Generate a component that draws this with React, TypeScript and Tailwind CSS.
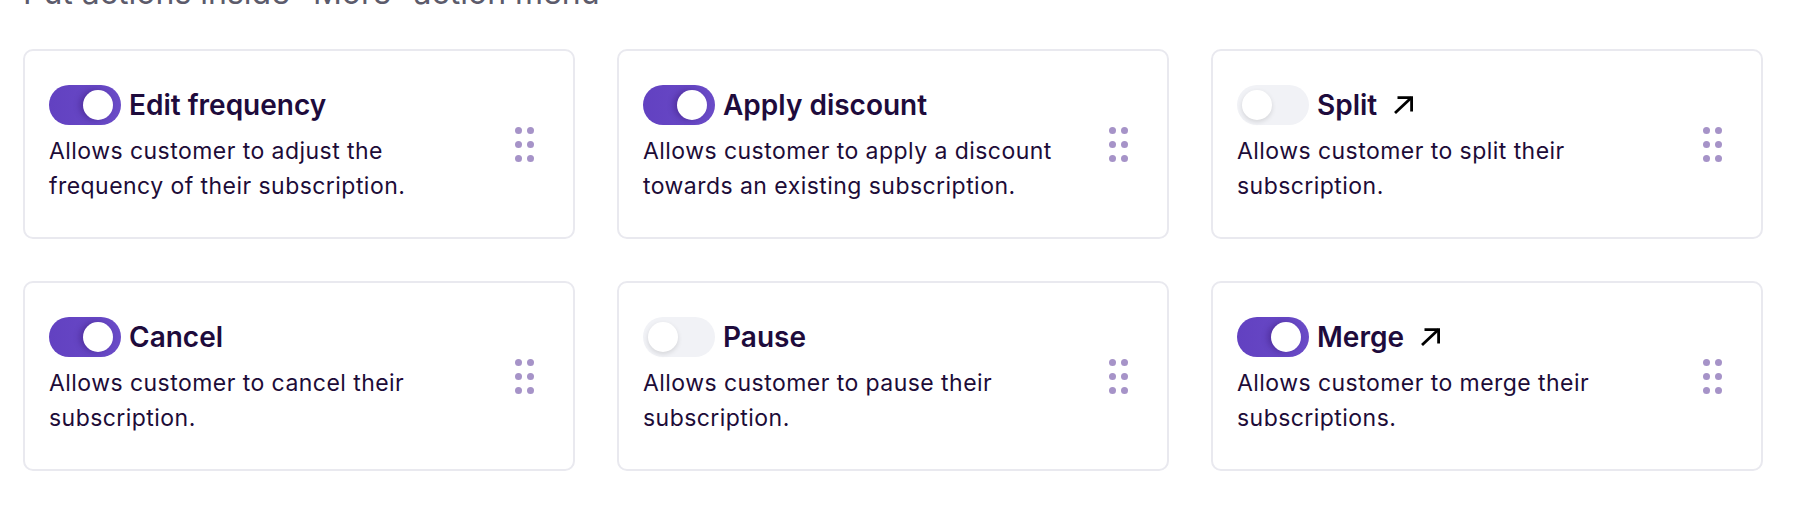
import React from "react";

interface ActionItem {
  title: string;
  description: string;
  enabled: boolean;
  external?: boolean;
}

const actions: ActionItem[] = [
  { title: "Edit frequency", description: "Allows customer to adjust the frequency of their subscription.", enabled: true },
  { title: "Apply discount", description: "Allows customer to apply a discount towards an existing subscription.", enabled: true },
  { title: "Split", description: "Allows customer to split their subscription.", enabled: false, external: true },
  { title: "Cancel", description: "Allows customer to cancel their subscription.", enabled: true },
  { title: "Pause", description: "Allows customer to pause their subscription.", enabled: false },
  { title: "Merge", description: "Allows customer to merge their subscriptions.", enabled: true, external: true },
];

function Toggle({ on }: { on: boolean }) {
  return (
    <div
      className={
        on
          ? "relative w-[72px] h-[40px] rounded-full bg-gradient-to-r from-[#6241c1] to-[#6a4bc7] flex-shrink-0"
          : "relative w-[72px] h-[40px] rounded-full bg-[#f1f2f6] flex-shrink-0"
      }
    >
      <div
        className={
          on
            ? "absolute top-[5px] right-[8px] w-[30px] h-[30px] rounded-full bg-white shadow-[-3px_0_6px_rgba(40,10,90,0.35)]"
            : "absolute top-[5px] left-[5px] w-[30px] h-[30px] rounded-full bg-white shadow-[0_2px_5px_rgba(0,0,0,0.12)]"
        }
      />
    </div>
  );
}

function ArrowIcon() {
  return (
    <svg width="21" height="18" viewBox="0 0 21 18" fill="none" className="flex-shrink-0">
      <path d="M2 17 L18.5 1.5" stroke="#000" strokeWidth="2.8" />
      <path d="M4.5 1.6 H18.6 V15.5" stroke="#000" strokeWidth="2.8" />
    </svg>
  );
}

function DragHandle() {
  return (
    <div className="grid grid-cols-2 gap-x-[5px] gap-y-[7px] w-[19px] flex-shrink-0">
      {Array.from({ length: 6 }).map((_, i) => (
        <div key={i} className="w-[7px] h-[7px] rounded-full bg-[#a693c8]" />
      ))}
    </div>
  );
}

function ActionCard({ item }: { item: ActionItem }) {
  return (
    <div className="h-[190px] bg-white border-2 border-[#e9e9ef] rounded-[10px] flex items-center pl-[24px] pr-[39px]">
      <div className="flex-1 min-w-0">
        <div className="flex items-center gap-[8px] h-[40px]">
          <Toggle on={item.enabled} />
          <span className="text-[28px] font-semibold text-[#1e0b3c] leading-none">{item.title}</span>
          {item.external && (
            <span className="ml-[8px] mt-[1px]">
              <ArrowIcon />
            </span>
          )}
        </div>
        <p className="mt-[9px] text-[23px] tracking-[0.45px] leading-[35px] text-[#1d0c38] max-w-[430px]">{item.description}</p>
      </div>
      <DragHandle />
    </div>
  );
}

export default function App() {
  return (
    <div className="h-[512px] overflow-hidden bg-white pl-[23px] pr-[37px]" style={{ fontFamily: "Inter, 'Liberation Sans', sans-serif" }}>
      <p className="mt-[-27px] text-[32px] leading-[40px] text-[#5c5b6b]">Put actions inside “More” action menu</p>
      <div className="mt-[36px] grid grid-cols-3 gap-x-[42px] gap-y-[42px]">
        {actions.map((a) => (
          <ActionCard key={a.title} item={a} />
        ))}
      </div>
    </div>
  );
}
